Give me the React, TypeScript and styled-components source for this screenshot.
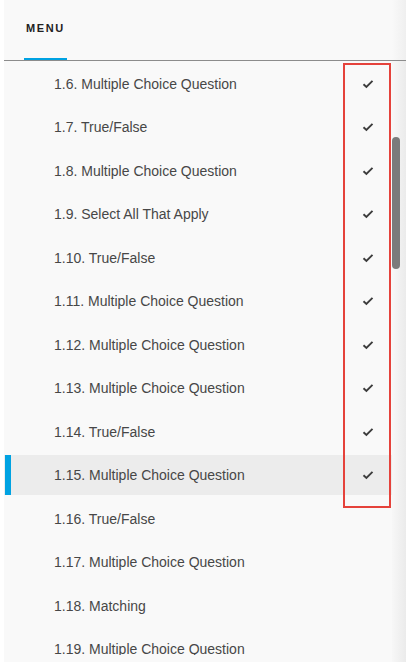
import styled, { createGlobalStyle } from 'styled-components';

const GlobalStyle = createGlobalStyle`
    html, body {
        margin: 0;
        padding: 0;
        background: #ffffff;
        font-family: "Liberation Sans", Arial, sans-serif;
    }
`;

const Panel = styled.nav`
    position: relative;
    margin-left: 4px;
    width: 402px;
    height: 662px;
    background: #f9f9f9;
    display: flex;
    flex-direction: column;
    overflow: hidden;
`;

const Header = styled.div`
    height: 60px;
    flex-shrink: 0;
    padding-left: 20px;
    display: flex;
    align-items: flex-start;
    border-bottom: 1px solid #8c8c8c;
    background: linear-gradient(to right, #f9f9f9 388px, #efefef);
`;

const Tab = styled.div`
    height: 60px;
    padding: 22px 2px 0;
    box-sizing: border-box;
    border-bottom: 2px solid #00a2e2;
    font-size: 11px;
    font-weight: bold;
    letter-spacing: 1.6px;
    color: #222;
`;

const Body = styled.div`
    flex: 1;
    display: flex;
    min-height: 0;
`;

const List = styled.ul`
    flex: 1;
    list-style: none;
    margin: 0;
    padding: 2.5px 0 0;
    height: 591px;
    overflow: hidden;
`;

const Row = styled.li<{ $active?: boolean }>`
    position: relative;
    height: 40px;
    margin-bottom: 3.5px;
    display: flex;
    align-items: center;
    padding-left: 50px;
    padding-right: 16px;
    background: ${(p) => (p.$active ? '#ececec' : 'transparent')};
    font-size: 14px;
    color: #474747;
    &::before {
        content: '';
        position: absolute;
        left: 1px;
        top: 0;
        bottom: 0;
        width: 6px;
        background: ${(p) => (p.$active ? '#00a2e2' : 'transparent')};
    }
`;

const Label = styled.span`
    flex: 1;
`;

const Check = styled.svg`
    width: 12px;
    height: 12px;
    margin-right: 2px;
    color: #3c3c3c;
`;

const Track = styled.div`
    width: 14px;
    flex-shrink: 0;
    padding-top: 76px;
    box-sizing: border-box;
    background: linear-gradient(to right, #f7f7f7, #ebebeb);
`;

const Thumb = styled.div`
    width: 8px;
    height: 132px;
    border-radius: 4px;
    background: #7b7b7b;
`;

const Annotation = styled.div`
    position: absolute;
    left: 339px;
    top: 63px;
    width: 48px;
    height: 445px;
    box-sizing: border-box;
    border: 2.5px solid #e5423b;
    pointer-events: none;
`;

const items = [
    { n: '1.6.', t: 'Multiple Choice Question', done: true },
    { n: '1.7.', t: 'True/False', done: true },
    { n: '1.8.', t: 'Multiple Choice Question', done: true },
    { n: '1.9.', t: 'Select All That Apply', done: true },
    { n: '1.10.', t: 'True/False', done: true },
    { n: '1.11.', t: 'Multiple Choice Question', done: true },
    { n: '1.12.', t: 'Multiple Choice Question', done: true },
    { n: '1.13.', t: 'Multiple Choice Question', done: true },
    { n: '1.14.', t: 'True/False', done: true },
    { n: '1.15.', t: 'Multiple Choice Question', done: true, active: true },
    { n: '1.16.', t: 'True/False' },
    { n: '1.17.', t: 'Multiple Choice Question' },
    { n: '1.18.', t: 'Matching' },
    { n: '1.19.', t: 'Multiple Choice Question' },
];

const CheckIcon = () => (
    <Check viewBox="0 0 12 12">
        <path d="M1.5 6.2 L4.4 9 L10.5 2.8" fill="none" stroke="currentColor" strokeWidth="1.9" />
    </Check>
);

export default function App() {
    return (
        <>
            <GlobalStyle />
            <Panel>
                <Header>
                    <Tab>MENU</Tab>
                </Header>
                <Body>
                    <List>
                        {items.map((it) => (
                            <Row key={it.n} $active={it.active}>
                                <Label>
                                    {it.n} {it.t}
                                </Label>
                                {it.done && <CheckIcon />}
                            </Row>
                        ))}
                    </List>
                    <Track>
                        <Thumb />
                    </Track>
                </Body>
                <Annotation />
            </Panel>
        </>
    );
}
